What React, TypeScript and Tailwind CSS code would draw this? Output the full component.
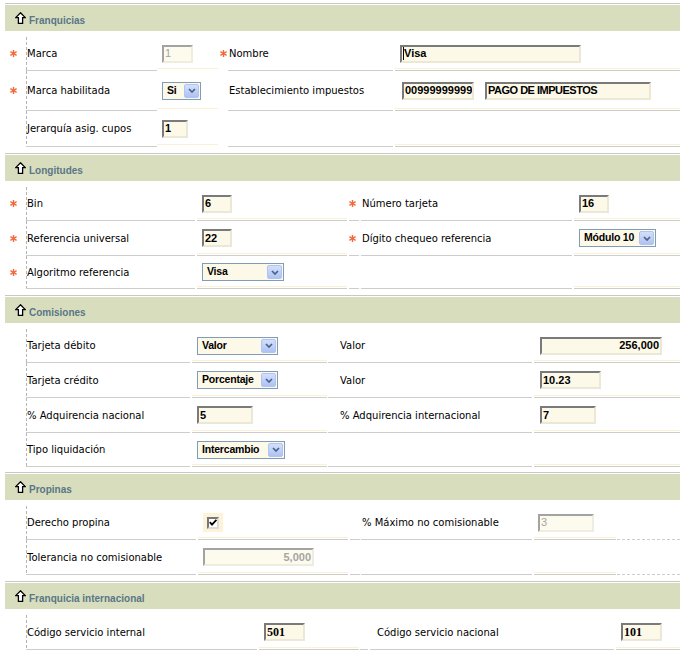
import React from "react";

type LineKind = "gray" | "cream" | "both" | "none" | "dashed";

const lineCls: Record<LineKind, string> = {
  gray: "border-b border-[#cdcdcd]",
  cream:
    "border-b border-transparent bg-[linear-gradient(to_top,transparent_1px,#fbf1d4_1px,#fbf1d4_2px,transparent_2px)]",
  both: "border-b border-[#cdcdcd] bg-[linear-gradient(to_top,transparent_1px,#fbf1d4_1px,#fbf1d4_2px,transparent_2px)]",
  none: "border-b border-transparent",
  dashed: "border-b border-dashed border-[#cdcdcd]",
};

type Col = { w: string; line: LineKind; dash?: boolean; pad?: string };
type Row = { h: string; cells: React.ReactNode[] };

function Star() {
  return (
    <svg width="7" height="7" viewBox="0 0 7 7">
      <g stroke="#f5673a" strokeWidth="1.4">
        <line x1="3.5" y1="0" x2="3.5" y2="7" />
        <line x1="0.4" y1="1.7" x2="6.6" y2="5.3" />
        <line x1="0.4" y1="5.3" x2="6.6" y2="1.7" />
      </g>
    </svg>
  );
}

function UpArrow() {
  return (
    <svg width="11" height="12" viewBox="0 0 11 12" className="mt-[7px] shrink-0">
      <polygon
        points="5.5,0.8 10.3,5.6 7.6,5.6 7.6,11.3 3.4,11.3 3.4,5.6 0.7,5.6"
        fill="white"
        stroke="black"
        strokeWidth="1.3"
        strokeLinejoin="miter"
      />
    </svg>
  );
}

function Dash() {
  return (
    <div className="w-px shrink-0 self-stretch bg-[linear-gradient(to_bottom,#b4b4b4_3px,transparent_3px)] bg-[length:1px_5px]" />
  );
}

function Field({
  w,
  value,
  right = false,
  disabled = false,
  serif = false,
  caret = false,
  extra = "",
}: {
  w: string;
  value: string;
  right?: boolean;
  disabled?: boolean;
  serif?: boolean;
  caret?: boolean;
  extra?: string;
}) {
  const border = disabled
    ? "border-t-[#a3a3a3] border-l-[#a3a3a3] border-b-[#efece0] border-r-[#efece0] bg-[#fdfaee]"
    : "border-t-[#7a7a7a] border-l-[#7a7a7a] border-b-[#ebe8d6] border-r-[#ebe8d6] bg-[#fdf9e8]";
  const font = serif
    ? "font-['Liberation_Serif',serif] font-bold text-[12px] text-black"
    : disabled
      ? "font-['Liberation_Sans',Arial,sans-serif] text-[11px] text-[#a5a5a5]"
      : "font-['Liberation_Sans',Arial,sans-serif] font-bold text-[11px] text-black";
  return (
    <div
      className={`flex h-[18px] shrink-0 items-center overflow-hidden border-2 px-[1px] ${border} ${w} ${
        right ? "justify-end" : ""
      }`}
    >
      {caret && <span className="h-[13px] w-px shrink-0 bg-black" />}
      <span className={`${font} ${extra} leading-none whitespace-nowrap`}>{value}</span>
    </div>
  );
}

function Select({ w, value }: { w: string; value: string }) {
  return (
    <div className={`flex h-[18px] shrink-0 items-stretch border border-[#7f9db9] bg-[#fdf9e8] ${w}`}>
      <span className="flex flex-1 items-center overflow-hidden pl-[4px] font-['Liberation_Sans',Arial,sans-serif] text-[10.5px] font-bold tracking-[-0.2px] whitespace-nowrap text-black">
        {value}
      </span>
      <span className="m-px flex w-[15px] shrink-0 items-center justify-center rounded-[2px] border border-[#b0c4f2] bg-gradient-to-b from-[#d3dffd] to-[#aec2f3]">
        <svg width="8" height="5" viewBox="0 0 8 5">
          <path d="M1 1 L4 4 L7 1" fill="none" stroke="#4d6185" strokeWidth="1.7" />
        </svg>
      </span>
    </div>
  );
}

function Check() {
  return (
    <div className="flex h-[19px] w-[20px] items-center justify-center bg-[#fcf3d9]">
      <div className="flex h-[12px] w-[12px] items-center justify-center border-2 border-t-[#777] border-l-[#777] border-b-[#dcdcdc] border-r-[#dcdcdc] bg-white">
        <svg width="8" height="7" viewBox="0 0 8 7">
          <path d="M0.8 3.2 L3 5.6 L7.4 0.8" fill="none" stroke="black" strokeWidth="1.8" />
        </svg>
      </div>
    </div>
  );
}

function Grid({ cols, rows }: { cols: Col[]; rows: Row[] }) {
  return (
    <>
      {rows.map((row, i) => (
        <div key={i} className={`flex ${row.h}`}>
          {cols.map((c, j) => (
            <div
              key={j}
              className={`flex shrink-0 items-center whitespace-nowrap ${c.w} ${lineCls[c.line]}`}
            >
              {c.dash && <Dash />}
              <div className={`flex items-center ${c.pad ?? ""}`}>{row.cells[j]}</div>
            </div>
          ))}
        </div>
      ))}
    </>
  );
}

function Section({
  title,
  mt = "mt-[6px]",
  children,
}: {
  title: string;
  mt?: string;
  children: React.ReactNode;
}) {
  return (
    <div className={mt}>
      <div className="h-px bg-[#c8c8c8]" />
      <div className="mt-px flex h-[26px] items-start bg-[#d8debd] pl-[10px]">
        <UpArrow />
        <span className="mt-[10px] ml-[3px] font-['Liberation_Sans',Arial,sans-serif] text-[10px] leading-[12px] font-bold text-[#5a7687]">
          {title}
        </span>
      </div>
      <div className="pt-[6px]">{children}</div>
    </div>
  );
}

const s1Cols: Col[] = [
  { w: "w-[21px]", line: "none", pad: "pl-[5px]" },
  { w: "w-[131px]", line: "gray", dash: true },
  { w: "w-[61px]", line: "cream", pad: "pl-[5px]" },
  { w: "w-[10px]", line: "none", pad: "pl-[2px]" },
  { w: "w-[165px] mr-[2px]", line: "gray", pad: "pl-[1px]" },
  { w: "w-[285px]", line: "both", pad: "pl-[5px]" },
];

const s2Cols: Col[] = [
  { w: "w-[21px]", line: "none", pad: "pl-[5px]" },
  { w: "w-[169px] mr-[2px]", line: "gray", dash: true },
  { w: "w-[150px] mr-[2px]", line: "both", pad: "pl-[5px]" },
  { w: "w-[10px] mr-[2px]", line: "gray" },
  { w: "w-[211px] mr-[2px]", line: "gray", pad: "pl-[1px]" },
  { w: "w-[106px]", line: "both", pad: "pl-[5px]" },
];

const s3Cols: Col[] = [
  { w: "w-[21px]", line: "none" },
  { w: "w-[164px] mr-[2px]", line: "gray", dash: true },
  { w: "w-[135px] mr-[1px]", line: "both", pad: "pl-[5px]" },
  { w: "w-[204px] mr-[2px]", line: "gray", pad: "pl-[12px]" },
  { w: "w-[146px]", line: "both", pad: "pl-[6px]" },
];

const s4Cols: Col[] = [
  { w: "w-[21px]", line: "none" },
  { w: "w-[170px] mr-[2px]", line: "gray", dash: true },
  { w: "w-[150px] mr-[2px]", line: "both", pad: "pl-[5px]" },
  { w: "w-[10px] mr-[1px]", line: "gray" },
  { w: "w-[171px] mr-[2px]", line: "gray", pad: "pl-[1px]" },
  { w: "w-[82px] mr-[1px]", line: "both", pad: "pl-[4px]" },
  { w: "w-[63px]", line: "dashed" },
];

const s5Cols: Col[] = [
  { w: "w-[21px]", line: "none" },
  { w: "w-[231px] mr-[2px]", line: "gray", dash: true },
  { w: "w-[100px] mr-[1px]", line: "both", pad: "pl-[5px]" },
  { w: "w-[8px] mr-[2px]", line: "gray" },
  { w: "w-[244px] mr-[2px]", line: "gray", pad: "pl-[7px]" },
  { w: "w-[64px]", line: "both", pad: "pl-[5px]" },
];

export default function App() {
  return (
    <div className="min-h-[652px] w-[680px] bg-white pt-[3px] pl-[5px] font-['DejaVu_Sans',sans-serif] text-[10px] text-black">
      <Section title="Franquicias" mt="mt-0">
        <Grid
          cols={s1Cols}
          rows={[
            {
              h: "h-[34px]",
              cells: [
                <Star />,
                "Marca",
                <Field w="w-[31px]" value="1" disabled />,
                <Star />,
                "Nombre",
                <Field w="w-[181px]" value="Visa" caret />,
              ],
            },
            {
              h: "h-[40px]",
              cells: [
                <Star />,
                "Marca habilitada",
                <Select w="w-[39px]" value="Si" />,
                null,
                "Establecimiento impuestos",
                <div className="flex pl-[2px]">
                  <Field w="w-[72px]" value="00999999999" />
                  <div className="ml-[11px]">
                    <Field w="w-[166px]" value="PAGO DE IMPUESTOS" extra="tracking-[-0.5px]" />
                  </div>
                </div>,
              ],
            },
            {
              h: "h-[36px]",
              cells: [null, "Jerarquía asig. cupos", <Field w="w-[26px]" value="1" />, null, null, null],
            },
          ]}
        />
      </Section>

      <Section title="Longitudes">
        <Grid
          cols={s2Cols}
          rows={[
            {
              h: "h-[34px]",
              cells: [
                <Star />,
                "Bin",
                <Field w="w-[30px]" value="6" />,
                <Star />,
                "Número tarjeta",
                <Field w="w-[30px]" value="16" />,
              ],
            },
            {
              h: "h-[35px]",
              cells: [
                <Star />,
                "Referencia universal",
                <Field w="w-[30px]" value="22" />,
                <Star />,
                "Dígito chequeo referencia",
                <Select w="w-[77px]" value="Módulo 10" />,
              ],
            },
            {
              h: "h-[33px]",
              cells: [<Star />, "Algoritmo referencia", <Select w="w-[82px]" value="Visa" />, null, null, null],
            },
          ]}
        />
      </Section>

      <Section title="Comisiones">
        <Grid
          cols={s3Cols}
          rows={[
            {
              h: "h-[34px]",
              cells: [
                null,
                "Tarjeta débito",
                <Select w="w-[81px]" value="Valor" />,
                "Valor",
                <Field w="w-[122px]" value="256,000" right />,
              ],
            },
            {
              h: "h-[35px]",
              cells: [
                null,
                "Tarjeta crédito",
                <Select w="w-[81px]" value="Porcentaje" />,
                "Valor",
                <Field w="w-[61px]" value="10.23" />,
              ],
            },
            {
              h: "h-[35px]",
              cells: [
                null,
                "% Adquirencia nacional",
                <Field w="w-[56px]" value="5" />,
                "% Adquirencia internacional",
                <Field w="w-[56px]" value="7" />,
              ],
            },
            {
              h: "h-[34px]",
              cells: [null, "Tipo liquidación", <Select w="w-[88px]" value="Intercambio" />, null, null],
            },
          ]}
        />
      </Section>

      <Section title="Propinas" mt="mt-[5px]">
        <Grid
          cols={s4Cols}
          rows={[
            {
              h: "h-[34px]",
              cells: [
                null,
                "Derecho propina",
                <Check />,
                null,
                "% Máximo no comisionable",
                <Field w="w-[56px]" value="3" disabled />,
                null,
              ],
            },
            {
              h: "h-[35px]",
              cells: [
                null,
                "Tolerancia no comisionable",
                <Field w="w-[111px]" value="5,000" right disabled extra="font-bold" />,
                null,
                null,
                null,
                null,
              ],
            },
          ]}
        />
      </Section>

      <Section title="Franquicia internacional">
        <Grid
          cols={s5Cols}
          rows={[
            {
              h: "h-[35px]",
              cells: [
                null,
                "Código servicio internal",
                <Field w="w-[41px]" value="501" serif />,
                null,
                "Código servicio nacional",
                <Field w="w-[41px]" value="101" serif />,
              ],
            },
          ]}
        />
      </Section>
    </div>
  );
}
